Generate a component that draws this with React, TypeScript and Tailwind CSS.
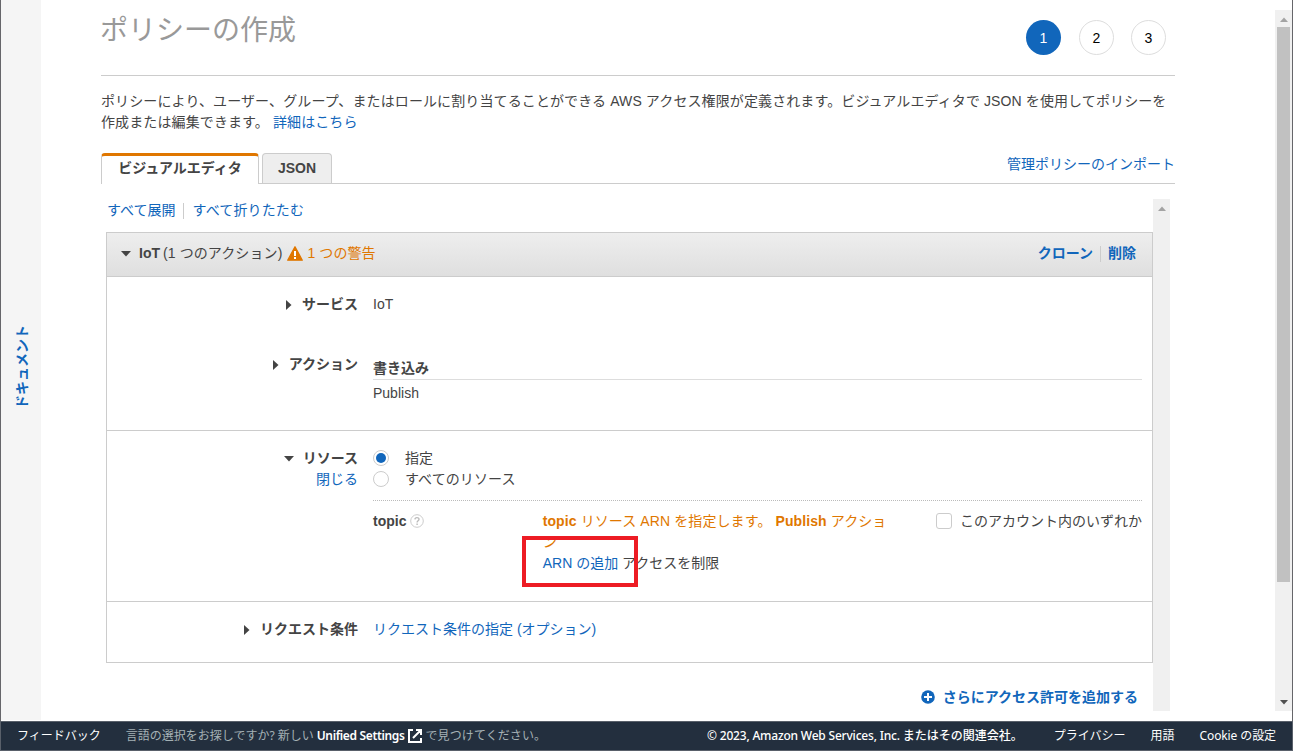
import type { ReactNode } from 'react';

interface LabelProps {
  open?: boolean;
  children: ReactNode;
}

function Caret({ open }: { open?: boolean }) {
  return open ? (
    <svg width="10" height="6" viewBox="0 0 10 6" className="mt-px shrink-0">
      <path d="M0 0h10L5 5.5z" fill="#444" />
    </svg>
  ) : (
    <svg width="6" height="10" viewBox="0 0 6 10" className="shrink-0">
      <path d="M0 0v10L5.5 5z" fill="#444" />
    </svg>
  );
}

function RowLabel({ open, children }: LabelProps) {
  return (
    <div className={`flex items-center justify-end font-bold ${open ? 'gap-[9px]' : 'gap-[10px]'}`}>
      <Caret open={open} />
      <span>{children}</span>
    </div>
  );
}

function Link({ children }: { children: ReactNode }) {
  return <span className="text-[#1166bb]">{children}</span>;
}

function Radio({ checked }: { checked?: boolean }) {
  return (
    <span className="mb-0.5 flex size-4 items-center justify-center rounded-full border border-[#ccc] bg-white">
      {checked && <span className="size-2.5 rounded-full bg-[#1166bb]" />}
    </span>
  );
}

function Steps() {
  return (
    <div className="flex pt-5 pr-[9px] text-sm text-black">
      <span className="mr-[18px] flex size-[35px] items-center justify-center rounded-full bg-[#1166bb] text-white">1</span>
      <span className="mr-[17px] flex size-[35px] items-center justify-center rounded-full border border-[#ddd]">2</span>
      <span className="flex size-[35px] items-center justify-center rounded-full border border-[#ddd]">3</span>
    </div>
  );
}

function Tabs() {
  return (
    <div className="mt-5 flex h-[31px] border-b border-[#ccc]">
      <div className="-mb-px flex h-[31px] w-[158px] justify-center rounded-t border-x border-t-3 border-x-[#ccc] border-t-[#e07700] bg-white font-bold leading-[24px]">
        ビジュアルエディタ
      </div>
      <div className="ml-[3px] flex h-[30px] w-[70px] justify-center rounded-t border border-b-0 border-[#ccc] bg-[#eee] font-bold leading-[29px]">
        JSON
      </div>
      <div className="ml-auto pt-px leading-[21px]">
        <Link>管理ポリシーのインポート</Link>
      </div>
    </div>
  );
}

function PolicyCard() {
  return (
    <div className="h-[431px] border border-[#ccc]">
      <div className="flex h-[44px] items-center border-b border-[#ccc] bg-linear-to-b from-[#eee] to-[#dfdfdf] pb-[3px] pl-[14px] pr-4">
        <Caret open />
        <span className="ml-2 font-bold">IoT</span>
        <span className="ml-[3px] tracking-[0.1px]">(1 つのアクション)</span>
        <svg width="16" height="15" viewBox="0 0 16 15" className="ml-[5px] mr-1">
          <path d="M8 0.8 15.3 14.2H.7z" fill="#e07700" stroke="#e07700" strokeWidth="1.3" strokeLinejoin="round" />
          <path d="M7 5h2v5H7zM7 11h2v2H7z" fill="#fff" />
        </svg>
        <span className="tracking-[0.1px] text-[#e07700]">1 つの警告</span>
        <span className="ml-auto flex items-center pt-px font-bold">
          <Link>クローン</Link>
          <span className="ml-[7px] mr-[7px] h-4 w-px bg-[#ccc]" />
          <Link>削除</Link>
        </span>
      </div>

      <div className="flex h-[154px] border-b border-[#ccc]">
        <div className="w-[251px] pt-[17px]">
          <RowLabel>サービス</RowLabel>
          <div className="pt-[39px]">
            <RowLabel>アクション</RowLabel>
          </div>
        </div>
        <div className="ml-[15px] w-[769px] pt-[17px]">
          <div>IoT</div>
          <div className="mt-[43px] h-[22px] border-b border-[#ddd] font-bold">書き込み</div>
          <div className="mt-[3px]">Publish</div>
        </div>
      </div>

      <div className="flex h-[171px] border-b border-[#ccc]">
        <div className="w-[251px] pt-[17px] text-right">
          <RowLabel open>リソース</RowLabel>
          <Link>閉じる</Link>
        </div>
        <div className="ml-[15px] w-[769px] pt-[17px]">
          <div className="flex items-center gap-4">
            <Radio checked />
            <span>指定</span>
          </div>
          <div className="flex items-center gap-4">
            <Radio />
            <span className="tracking-[0.1px]">すべてのリソース</span>
          </div>
          <div className="mt-[10px] flex border-t border-dotted border-[#bbb] pt-[10px]">
            <div className="flex h-[21px] w-[170px] items-center gap-1">
              <b>topic</b>
              <svg width="14" height="14" viewBox="0 0 14 14" className="mb-px">
                <circle cx="7" cy="7" r="6.3" fill="none" stroke="#ccc" />
                <path d="M4.9 5.4C5 3 9 3 9 5.3c0 1.4-1.9 1.5-1.9 3.1M7.1 9.6v1.5" fill="none" stroke="#bbb" strokeWidth="1.4" />
              </svg>
            </div>
            <div className="relative w-[394px]">
              <div className="tracking-[0.1px] text-[#e07700]">
                <b>topic</b> リソース ARN を指定します。 <b>Publish</b> アクショ
                <br />ン
              </div>
              <div>
                <Link>ARN の追加</Link> アクセスを制限
              </div>
              {/* callout around the ARN link */}
              <div className="absolute -left-[21px] top-[25px] h-[51px] w-[116px] border-4 border-[#ed1c24]" />
            </div>
            <div className="flex h-[21px] items-center gap-2 whitespace-nowrap">
              <span className="mb-px size-4 rounded-[3px] border border-[#ccc]" />
              <span>このアカウント内のいずれか</span>
            </div>
          </div>
        </div>
      </div>

      <div className="flex pt-[17px]">
        <div className="w-[251px]">
          <RowLabel>リクエスト条件</RowLabel>
        </div>
        <div className="ml-[15px]">
          <Link>リクエスト条件の指定 (オプション)</Link>
        </div>
      </div>
    </div>
  );
}

function Footer() {
  return (
    <footer className="flex h-[30px] items-center whitespace-nowrap border border-[#59606a] bg-[#232f3e] px-4 font-['Noto_Sans','Noto_Sans_CJK_JP',sans-serif] text-xs text-white">
      <span>フィードバック</span>
      <span className="ml-[25px] text-[#a5b1b5]">言語の選択をお探しですか? 新しい</span>
      <span className="ml-[3px] font-semibold tracking-[-0.35px]">Unified Settings</span>
      <svg width="14" height="14" viewBox="0 0 14 14" fill="none" stroke="#fff" strokeWidth="2" className="ml-[3px] mr-1">
        <path d="M5 1H1v12h12V9M8 1h5v5M13 1 5 9" />
      </svg>
      <span className="tracking-[0.1px] text-[#a5b1b5]">で見つけてください。</span>
      <span className="ml-auto font-medium">
        <span className="tracking-[-0.2px]">© 2023, Amazon Web Services, Inc. </span>
        またはその関連会社。
      </span>
      <span className="ml-[31px]">プライバシー</span>
      <span className="ml-[25px]">用語</span>
      <span className="ml-[25px] tracking-[-0.1px]">Cookie の設定</span>
    </footer>
  );
}

export default function App() {
  return (
    <div className="h-[751px] w-[1293px] overflow-hidden bg-white font-['Liberation_Sans','Noto_Sans_CJK_JP',sans-serif] text-sm leading-[21px] text-[#444]">
      <div className="flex h-[721px] border-x border-[#66666a]">
        <aside className="flex h-[720px] w-10 items-center justify-center bg-[#f5f5f5] pl-0.5 pt-[14px]">
          <span className="rotate-180 font-bold text-[#1166bb] [text-orientation:sideways] [writing-mode:vertical-rl]">ドキュメント</span>
        </aside>

        <main className="ml-[60px] w-[1074px]">
          <div className="flex h-[76px] justify-between border-b border-[#ccc]">
            <h1 className="-ml-px pt-[10px] text-[28px] leading-[42px] text-[#999]">ポリシーの作成</h1>
            <Steps />
          </div>
          <p className="whitespace-nowrap pt-[15px] tracking-[0.11px]">
            ポリシーにより、ユーザー、グループ、またはロールに割り当てることができる AWS アクセス権限が定義されます。ビジュアルエディタで JSON を使用してポリシーを
            <br />
            作成または編集できます。 <Link>詳細はこちら</Link>
          </p>
          <Tabs />

          <div className="ml-[5px] mt-[15px] flex h-[512px] w-[1064px] overflow-hidden">
            <div className="w-[1047px]">
              <div className="flex h-[33px] pl-px pt-px">
                <Link>すべて展開</Link>
                <span className="ml-2 mr-2 mt-[3px] h-4 w-px bg-[#ccc]" />
                <span className="tracking-[0.15px]">
                  <Link>すべて折りたたむ</Link>
                </span>
              </div>
              <PolicyCard />
              <div className="mt-6 flex items-center justify-end gap-2 pr-[15px] font-bold text-[#1166bb]">
                <svg width="14" height="14" viewBox="0 0 14 14" className="mb-px">
                  <circle cx="7" cy="7" r="6.8" fill="#1166bb" />
                  <path d="M7 3v8M3 7h8" stroke="#fff" strokeWidth="2" />
                </svg>
                さらにアクセス許可を追加する
              </div>
            </div>
            <div className="flex w-[17px] justify-center bg-[#f0f0f0] pt-[7px]">
              <svg width="8" height="5" viewBox="0 0 8 5">
                <path d="M0 5h8L4 .5z" fill="#a3a3a3" />
              </svg>
            </div>
          </div>
        </main>

        <div className="ml-auto mt-[10px] flex h-[701px] w-[17px] flex-col items-center bg-[#f0f0f0] pb-[6px] pt-[7px]">
          <svg width="8" height="5" viewBox="0 0 8 5">
            <path d="M0 5h8L4 .5z" fill="#a3a3a3" />
          </svg>
          <div className="mt-[5px] h-[555px] w-[13px] bg-[#c1c1c1]" />
          <svg width="8" height="5" viewBox="0 0 8 5" className="mt-auto">
            <path d="M0 0h8L4 4.5z" fill="#505050" />
          </svg>
        </div>
      </div>
      <Footer />
    </div>
  );
}
